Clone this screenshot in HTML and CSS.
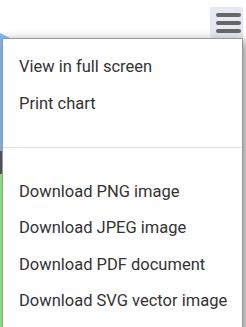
FILE: index.html
```html
<!DOCTYPE html>
<html>
<head>
<meta charset="utf-8">
<link rel="stylesheet" href="styles.css">
</head>
<body>
<div class="chart">
  <svg class="plot" width="246" height="327" viewBox="0 0 246 327">
    <polygon points="0,33 0,40 14,40" fill="#7cb5ec"/>
    <rect x="0" y="40" width="3" height="111" fill="#7cb5ec"/>
    <rect x="0" y="151" width="3" height="23" fill="#434348"/>
    <rect x="0" y="174" width="3" height="153" fill="#90ed7d"/>
  </svg>
  <div class="ctx-button">
    <svg width="33" height="31" viewBox="0 0 33 31">
      <rect x="6" y="6" width="25" height="4" rx="2" fill="#666"/>
      <rect x="6" y="14" width="25" height="4" rx="2" fill="#666"/>
      <rect x="6" y="22" width="25" height="4" rx="2" fill="#666"/>
    </svg>
  </div>
  <div class="menu">
    <div class="item">View in full screen</div>
    <div class="item">Print chart</div>
    <hr class="sep">
    <div class="item">Download PNG image</div>
    <div class="item">Download JPEG image</div>
    <div class="item">Download PDF document</div>
    <div class="item">Download SVG vector image</div>
  </div>
</div>
</body>
</html>
```

FILE: styles.css
```css
html, body {
  margin: 0;
  padding: 0;
  background: #fff;
  overflow: hidden;
}
.chart {
  position: relative;
  width: 246px;
  height: 327px;
  overflow: hidden;
  font-family: Roboto, "Liberation Sans", sans-serif;
}
.plot {
  position: absolute;
  left: 0;
  top: 0;
}
.ctx-button {
  position: absolute;
  left: 210px;
  top: 7px;
  width: 33px;
  height: 31px;
  background: #e6e8f4;
  border-radius: 2px;
}
.ctx-button svg {
  display: block;
}
.menu {
  position: absolute;
  left: 2px;
  top: 38px;
  width: 239px;
  height: 320px;
  background: #fff;
  border: 1px solid #999;
  box-shadow: 3px 3px 10px #888;
  padding: 10px 0 0;
}
.item {
  padding: 8.2px 16px;
  font-size: 16.5px;
  line-height: 20px;
  color: #333;
  white-space: nowrap;
}
.sep {
  border: none;
  border-top: 1px solid #e2e2e2;
  margin: 25.5px 0;
}
```
